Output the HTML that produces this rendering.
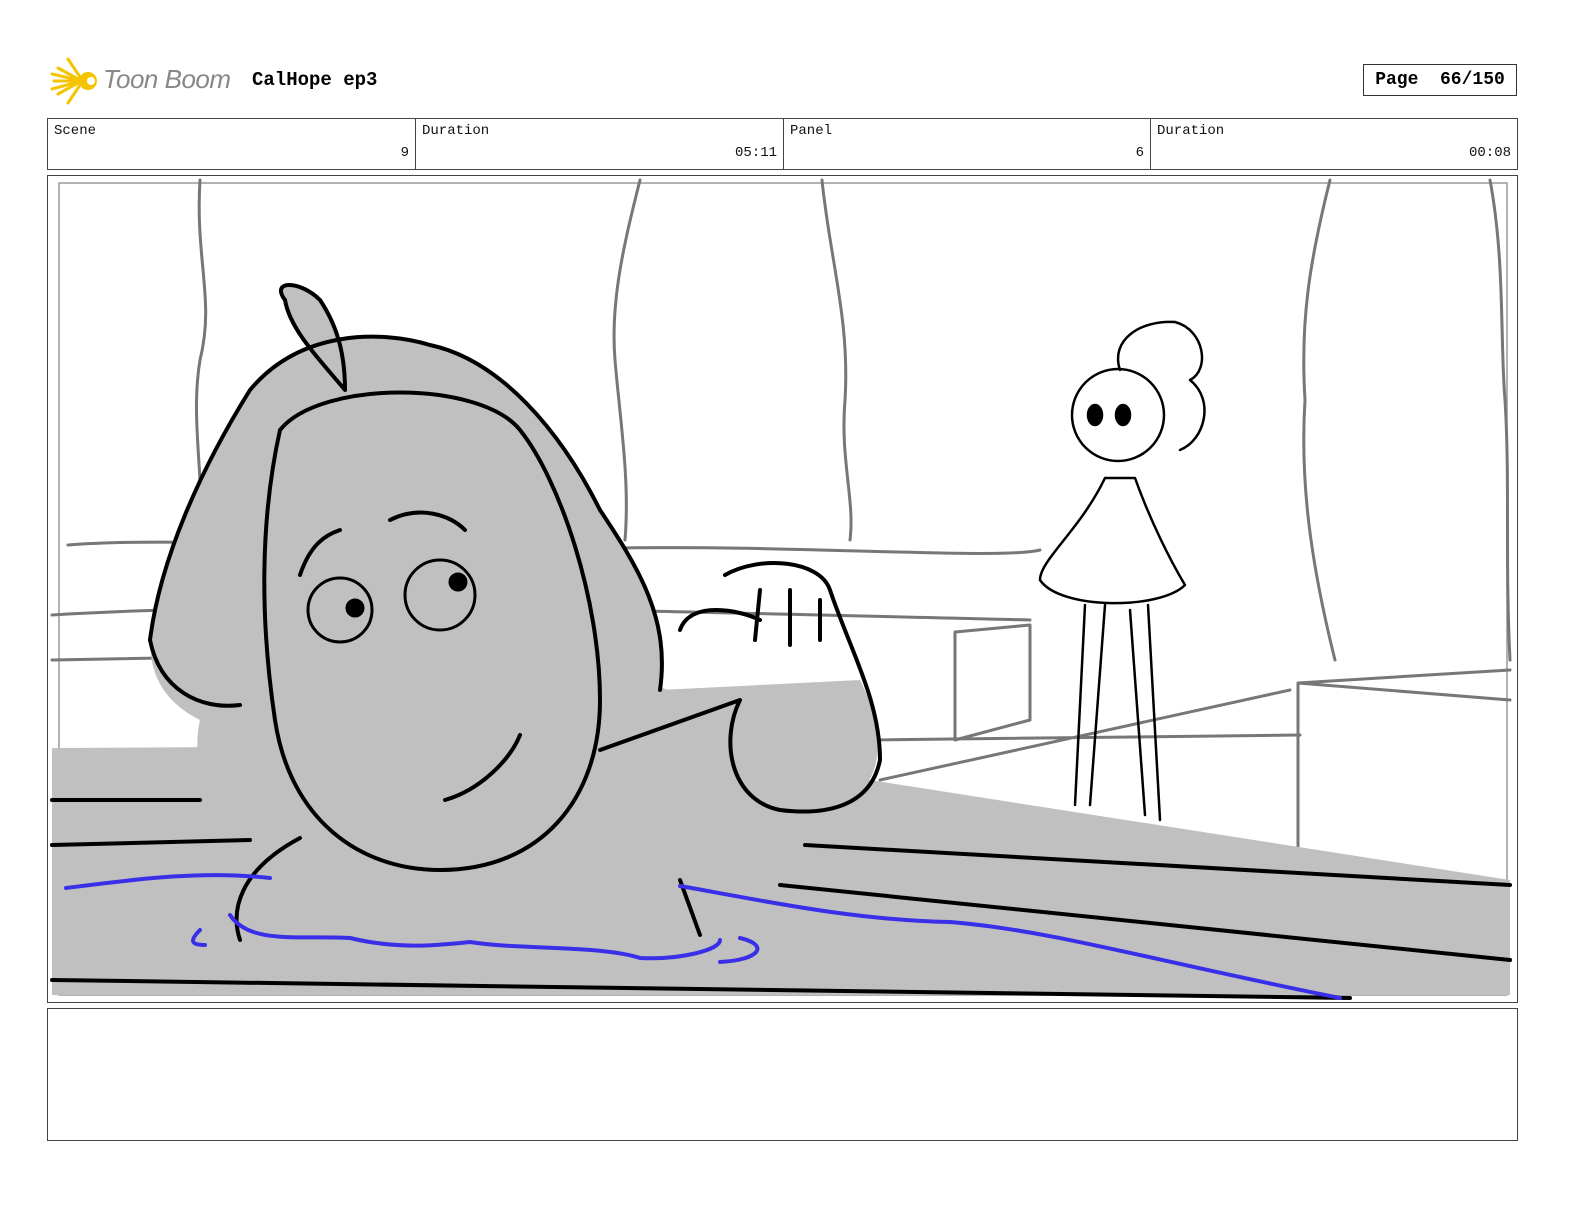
<!DOCTYPE html>
<html><head><style>
body{margin:0;width:1584px;height:1224px;background:#fff;position:relative;font-family:"Liberation Mono",monospace;overflow:hidden}
.a{position:absolute}
.cell{position:absolute;top:118px;height:51px;border-right:1px solid #444;font-size:14px;color:#111}
.cell .l{position:absolute;left:6px;top:5px}
.cell .r{position:absolute;right:6px;top:27px}
</style></head><body>
<svg class="a" style="left:50px;top:56px" width="50" height="50" viewBox="0 0 50 50">
<g stroke="#f5c400" stroke-width="3" stroke-linecap="round">
<line x1="28" y1="25" x2="4" y2="25"/><line x1="28" y1="23" x2="8" y2="12"/><line x1="28" y1="27" x2="8" y2="38"/>
<line x1="30" y1="21" x2="18" y2="3"/><line x1="30" y1="29" x2="18" y2="47"/><line x1="28" y1="24" x2="2" y2="18"/><line x1="28" y1="26" x2="2" y2="33"/></g>
<circle cx="38" cy="25" r="9" fill="#f5c400"/><circle cx="41" cy="25" r="4" fill="#fff"/></svg>
<div class="a" style="left:103px;top:64px;font:italic 26px 'Liberation Sans',sans-serif;color:#888;letter-spacing:-0.5px">Toon Boom</div>
<div class="a" style="left:252px;top:69px;font-weight:bold;font-size:19px">CalHope ep3</div>
<div class="a" style="left:1363px;top:64px;width:154px;height:32px;border:1px solid #333;box-sizing:border-box;font-weight:bold;font-size:18px;line-height:30px;text-align:center">Page&nbsp; 66/150</div>
<div class="a" style="left:47px;top:118px;width:1471px;height:52px;border:1px solid #444;box-sizing:border-box"></div>
<div class="cell" style="left:48px;width:367px"><span class="l">Scene</span><span class="r">9</span></div>
<div class="cell" style="left:416px;width:367px"><span class="l">Duration</span><span class="r">05:11</span></div>
<div class="cell" style="left:784px;width:366px"><span class="l">Panel</span><span class="r">6</span></div>
<div class="cell" style="left:1151px;width:366px;border-right:none"><span class="l">Duration</span><span class="r">00:08</span></div>
<div class="a" style="left:47px;top:175px;width:1471px;height:828px;border:1px solid #444;box-sizing:border-box;overflow:hidden">
<svg width="1469" height="826" viewBox="48 176 1469 826" fill="none" stroke-linecap="round" stroke-linejoin="round">
<rect x="59" y="183" width="1448" height="812" stroke="#999" stroke-width="1.5"/>
<g stroke="#777" stroke-width="3">
<path d="M200 180 C195 260 215 300 200 360 C190 420 205 480 200 540"/>
<path d="M640 180 C625 240 610 300 615 360 C620 420 630 480 625 540"/>
<path d="M822 180 C830 260 850 320 845 400 C840 460 855 500 850 540"/>
<path d="M1330 180 C1310 260 1300 320 1305 400 C1300 480 1310 560 1335 660"/>
<path d="M1490 180 C1505 260 1500 340 1505 400 C1510 480 1505 560 1510 660"/>
<path d="M68 545 C200 535 400 555 620 548 C800 545 1000 560 1040 550"/>
<path d="M52 615 C300 600 600 610 1030 620"/><path d="M52 660 L600 650"/>
<path d="M955 632 L1030 625 L1030 720 L955 740 Z"/>
<path d="M1298 683 L1510 670 M1298 683 L1298 850 M1298 683 L1510 700"/>
<path d="M880 780 L1290 690 M870 740 L1300 735"/>
</g>
<path d="M52 748 L600 745 L600 660 L870 780 L1510 880 L1510 995 L52 995 Z" fill="#c0c0c0"/>
<path d="M150 640 C160 560 200 470 250 390 C300 330 380 330 430 345 C500 360 560 430 600 510 C640 570 670 620 660 690 L860 680 C900 760 870 810 800 820 C760 840 720 860 680 880 L680 940 L240 940 C210 850 190 760 200 720 C160 700 150 670 150 640 Z" fill="#c0c0c0"/>
<path d="M285 300 C270 280 300 280 320 300 C340 330 345 360 345 390 C320 360 290 330 285 300Z" fill="#c0c0c0" stroke="#000" stroke-width="4"/>
<g stroke="#000" stroke-width="4">
<path d="M150 640 C160 560 200 470 250 390 C300 330 380 330 430 345 C500 360 560 430 600 510 C640 570 670 620 660 690"/>
<path d="M280 430 C260 520 260 620 275 720 C290 820 360 870 440 870 C540 870 600 800 600 700 C600 600 560 480 520 430 C480 380 320 380 280 430 Z"/>
<path d="M150 640 C160 690 200 710 240 705"/>
<path d="M725 575 C760 555 820 560 830 590 C850 650 880 700 880 760 C870 810 820 815 780 810 C730 800 720 740 740 700 L600 750"/>
<path d="M680 630 C690 600 740 610 760 620 M760 590 L755 640 M790 590 L790 645 M820 600 L820 640"/>
<path d="M52 980 L1350 998 M780 885 L1510 960 M805 845 L1510 885"/>
<path d="M52 800 L200 800 M52 845 L250 840"/>
<path d="M300 838 C240 870 230 910 240 940 M680 880 L700 935"/>
<path d="M390 520 C420 505 450 515 465 530 M300 575 C310 545 325 535 340 530"/>
<path d="M445 800 C480 790 510 760 520 735"/>
</g>
<g stroke="#000" stroke-width="3">
<circle cx="340" cy="610" r="32"/><circle cx="440" cy="595" r="35"/>
<circle cx="355" cy="608" r="8" fill="#000"/><circle cx="458" cy="582" r="8" fill="#000"/>
</g>
<g stroke="#3a2fe8" stroke-width="4">
<path d="M66 888 C130 880 200 870 270 878"/>
<path d="M230 915 C250 945 300 935 350 938 C400 950 440 945 470 942 C520 950 600 945 640 958 C680 960 720 950 720 940"/>
<path d="M680 886 C760 900 850 920 950 922 C1050 930 1150 960 1340 998"/>
<path d="M200 930 C190 940 190 945 205 945 M740 938 C770 945 760 960 720 962"/>
</g>
<g stroke="#000" stroke-width="2.5">
<circle cx="1118" cy="415" r="46" fill="#fff"/>
<path d="M1120 370 C1110 340 1140 320 1175 322 C1205 330 1210 370 1190 380 C1215 400 1205 440 1180 450"/>
<ellipse cx="1095" cy="415" rx="7" ry="10" fill="#000"/><ellipse cx="1123" cy="415" rx="7" ry="10" fill="#000"/>
<path d="M1105 478 C1080 530 1040 560 1040 580 C1060 610 1160 610 1185 585 C1170 560 1150 520 1135 478 Z" fill="#fff"/>
<path d="M1085 605 L1075 805 M1105 605 L1090 805 M1130 610 L1145 815 M1148 605 L1160 820"/>
</g>
</svg></div>
<div class="a" style="left:47px;top:1008px;width:1471px;height:133px;border:1px solid #444;box-sizing:border-box"></div>
</body></html>
